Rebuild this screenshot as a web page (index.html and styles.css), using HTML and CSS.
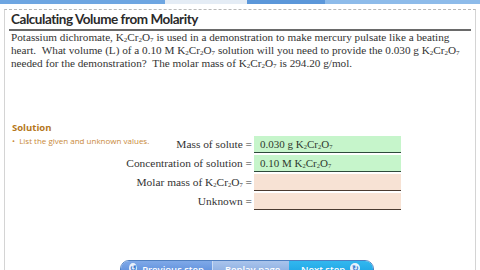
FILE: index.html
```html
<!DOCTYPE html>
<html lang="en">
<head>
  <meta charset="UTF-8">
  <title>Calculating Volume from Molarity</title>
  <link rel="stylesheet" href="styles.css">
</head>
<body>

  <div class="tabs">
    <span class="tab tab-a"></span>
    <span class="tab tab-b"></span>
    <span class="tab tab-c"></span>
    <span class="tab tab-d"></span>
  </div>

  <div class="panel">
    <h1>Calculating Volume from Molarity</h1>
    <p class="problem">
      Potassium dichromate, K<sub>2</sub>Cr<sub>2</sub>O<sub>7</sub> is used in a demonstration to make mercury pulsate like a beating<br>
      heart. &nbsp;What volume (L) of a 0.10 M K<sub>2</sub>Cr<sub>2</sub>O<sub>7</sub> solution will you need to provide the 0.030 g K<sub>2</sub>Cr<sub>2</sub>O<sub>7</sub><br>
      needed for the demonstration? &nbsp;The molar mass of K<sub>2</sub>Cr<sub>2</sub>O<sub>7</sub> is 294.20 g/mol.
    </p>

    <div class="solution">
      <h2>Solution</h2>

      <div class="fields">
        <div class="label first">
          <span class="hint">&bull; &nbsp;List the given and unknown values.</span>
          <span>Mass of solute =</span>
        </div>
        <span class="box given">0.030 g K<sub>2</sub>Cr<sub>2</sub>O<sub>7</sub></span>

        <div class="label">Concentration of solution =</div>
        <span class="box given">0.10 M K<sub>2</sub>Cr<sub>2</sub>O<sub>7</sub></span>

        <div class="label">Molar mass of K<sub>2</sub>Cr<sub>2</sub>O<sub>7</sub> =</div>
        <span class="box empty"></span>

        <div class="label">Unknown =</div>
        <span class="box empty"></span>
      </div>
    </div>

    <div class="nav">
      <button class="nav-btn prev"><span class="ico">&#8634;</span>Previous step</button>
      <button class="nav-btn replay">Replay page</button>
      <button class="nav-btn next">Next step<span class="ico">&#8635;</span></button>
    </div>
  </div>

</body>
</html>
```

FILE: styles.css
```css
body {
  margin: 0;
  padding: 0;
  background: #fff;
  font-family: "Liberation Serif", serif;
  width: 480px;
  height: 270px;
  overflow: hidden;
}

.tabs {
  display: flex;
  height: 4px;
}

.tab-a {
  width: 165px;
  background: #6ea6e2;
}

.tab-b {
  width: 82px;
  background: #e4ecf5;
}

.tab-c {
  width: 78px;
  background: #5b97da;
}

.tab-d {
  flex: 1;
  background: #8dbbea;
}

.panel {
  margin: 5px 4px 0 4px;
  border-top: 1px dashed #b8b8b8;
  border-left: 1px solid #d4d4d4;
  border-right: 1px solid #d4d4d4;
  height: 300px;
  padding: 0 4px;
}

h1 {
  font-family: Lato, sans-serif;
  font-weight: 700;
  font-size: 13.5px;
  letter-spacing: -0.45px;
  line-height: 17px;
  color: #2a2a2a;
  margin: 0;
  padding: 1px 2px 1px 2px;
  border-bottom: 2px solid #6a6a6a;
}

.problem {
  margin: 0 0 0 2px;
  font-size: 11.2px;
  line-height: 13px;
  color: #333;
  white-space: nowrap;
}

sub {
  font-size: 7px;
  vertical-align: -1px;
  line-height: 0;
}

.solution {
  margin-top: 51px;
}

.solution h2 {
  font-family: "Open Sans", sans-serif;
  font-size: 9.5px;
  font-weight: 700;
  color: #b5771c;
  margin: 0 0 0 3px;
  line-height: 13px;
}

.fields {
  display: grid;
  grid-template-columns: 243px 147px;
  column-gap: 2px;
  row-gap: 2px;
  margin-top: 2px;
}

.label {
  height: 17px;
  line-height: 17px;
  text-align: right;
  white-space: nowrap;
  font-size: 11.4px;
  color: #333;
}

.label.first {
  display: flex;
  justify-content: space-between;
}

.hint {
  font-family: "Open Sans", sans-serif;
  font-size: 8px;
  line-height: 9px;
  color: #c98a3a;
  margin-left: 3px;
}

.label sub,
.box sub {
  font-size: 6.5px;
}

.box {
  height: 17px;
  box-sizing: border-box;
  font-size: 11px;
  line-height: 16px;
  padding-left: 6px;
  color: #2f3a2f;
  white-space: nowrap;
}

.given {
  background: #c6f5cb;
  border-bottom: 1px solid #2d4a3a;
}

.empty {
  background: #f7e2d4;
  border-bottom: 1px solid #4a3a30;
}

.nav {
  display: flex;
  margin: 50px 0 0 111px;
  width: 252px;
  height: 18px;
  border-radius: 9px;
  overflow: hidden;
  border: 1px solid #4f7fc0;
}

.nav-btn {
  border: none;
  color: #fff;
  font-family: "Open Sans", sans-serif;
  font-size: 9.5px;
  font-weight: 600;
  padding: 2px 8px 0 8px;
  display: flex;
  align-items: flex-start;
  gap: 5px;
  white-space: nowrap;
}

.prev {
  width: 92px;
  background: linear-gradient(#7fa9e8, #4d82d6);
  border-right: 1px solid #c9dbf3;
}

.replay {
  width: 76px;
  padding-left: 12px;
  background: linear-gradient(#a9c4ec, #7ea3dc);
}

.next {
  flex: 1;
  background: linear-gradient(#32b8ef, #159ce0);
  padding-left: 12px;
}

.ico {
  display: inline-block;
  width: 10px;
  height: 10px;
  border-radius: 50%;
  background: #e8f2fc;
  color: #3a7bd0;
  font-size: 8px;
  line-height: 10px;
  text-align: center;
}
```
